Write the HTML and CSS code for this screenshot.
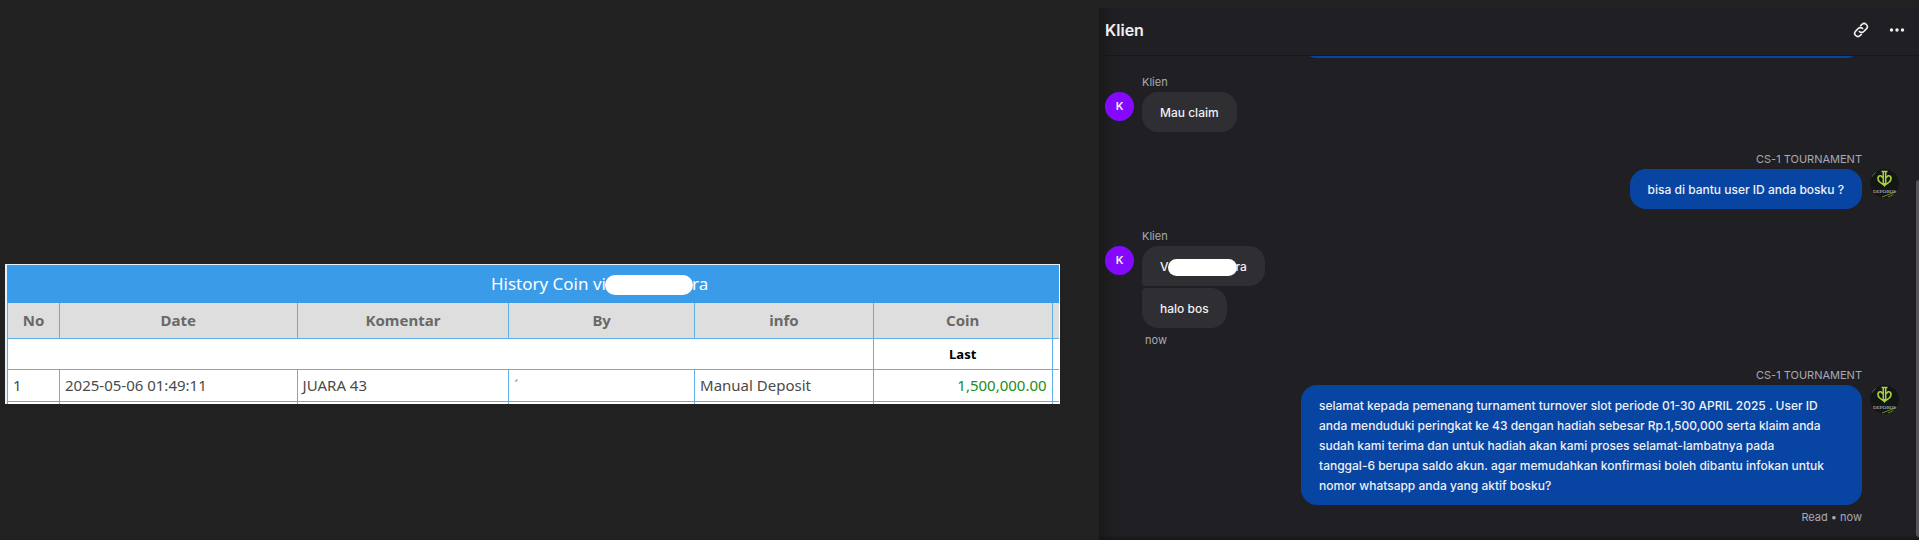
FILE: index.html
```
<!DOCTYPE html>
<html lang="id">
<head>
    <meta charset="UTF-8">
    <meta name="viewport" content="width=device-width, initial-scale=1.0">
    <title>Klien</title>
    <link rel="stylesheet" href="styles.css">
</head>
<body>
    <main class="page">
        <section class="history">
            <div class="history-box">
                <table>
                    <colgroup>
                        <col class="col-no">
                        <col class="col-date">
                        <col class="col-comment">
                        <col class="col-by">
                        <col class="col-info">
                        <col class="col-coin">
                        <col>
                    </colgroup>
                    <thead>
                        <tr class="title-row">
                            <th colspan="7">History Coin vi<span class="mask"></span>ra</th>
                        </tr>
                        <tr class="head-row">
                            <th>No</th>
                            <th>Date</th>
                            <th>Komentar</th>
                            <th>By</th>
                            <th>info</th>
                            <th>Coin</th>
                            <th></th>
                        </tr>
                    </thead>
                    <tbody>
                        <tr class="last-row">
                            <td colspan="5"></td>
                            <td>Last</td>
                            <td></td>
                        </tr>
                        <tr class="data-row">
                            <td>1</td>
                            <td>2025-05-06 01:49:11</td>
                            <td>JUARA 43</td>
                            <td class="faint">´</td>
                            <td>Manual Deposit</td>
                            <td class="coin">1,500,000.00</td>
                            <td></td>
                        </tr>
                        <tr class="data-row">
                            <td></td>
                            <td></td>
                            <td></td>
                            <td></td>
                            <td></td>
                            <td></td>
                            <td></td>
                        </tr>
                    </tbody>
                </table>
            </div>
        </section>

        <section class="chat">
            <header class="chat-header">
                <h1>Klien</h1>
                <button type="button" aria-label="Copy link">
                    <svg width="16" height="16" viewBox="0 0 24 24" fill="none" stroke="currentColor" stroke-width="2.4" stroke-linecap="round">
                        <path d="M9.500 14.200a4.700 4.700 0 0 0 6.700 0l3.800-3.800a4.700 4.700 0 0 0-6.700-6.700L11.500 5.500"/>
                        <path d="M14.500 9.800a4.700 4.700 0 0 0-6.700 0l-3.800 3.800a4.700 4.700 0 0 0 6.700 6.700L12.500 18.500"/>
                    </svg>
                </button>
                <button type="button" aria-label="More">
                    <svg width="16" height="16" viewBox="0 0 16 16" fill="currentColor">
                        <circle cx="2.500" cy="8" r="1.700"/>
                        <circle cx="8" cy="8" r="1.700"/>
                        <circle cx="13.500" cy="8" r="1.700"/>
                    </svg>
                </button>
            </header>

            <div class="messages">
                <div class="message agent previous">
                    <div class="stack">
                        <p class="bubble wide"></p>
                    </div>
                    <div class="avatar-space"></div>
                </div>

                <div class="message">
                    <div class="avatar">K</div>
                    <div class="stack">
                        <div class="name">Klien</div>
                        <p class="bubble">Mau claim</p>
                    </div>
                </div>

                <div class="message agent">
                    <div class="stack">
                        <div class="name">CS-1 TOURNAMENT</div>
                        <p class="bubble">bisa di bantu user ID anda bosku ?</p>
                    </div>
                    <svg class="avatar" viewBox="0 0 29 29">
                        <g id="logo">
                            <circle cx="14.5" cy="14.5" r="14.5" fill="#141515"/>
                            <path d="M1.500 8L6 2.500M12 28L26.500 22.500M18 28L24 25.500" stroke="#6d8f1c" fill="none"/>
                            <path d="M11.500 2.500h6M13.300 2.500v12M15.700 2.500v12" stroke="#a9d636" stroke-width="1.500" fill="none"/>
                            <path d="M14.500 16C10 14 8 12 8 9.500C8 6 12.500 6 12.500 9M14.500 16C19 14 21 12 21 9.500C21 6 16.500 6 16.500 9" stroke="#a9d636" stroke-width="1.600" fill="none"/>
                            <path d="M11.500 14h6l-3 4z" fill="#a9d636"/>
                            <text x="14.500" y="23.500" text-anchor="middle" class="logo-text">DEPOBOS</text>
                        </g>
                    </svg>
                </div>

                <div class="message">
                    <div class="avatar">K</div>
                    <div class="stack">
                        <div class="name">Klien</div>
                        <p class="bubble first">V<span class="mask"></span>ra</p>
                        <p class="bubble second">halo bos</p>
                        <div class="status">now</div>
                    </div>
                </div>

                <div class="message agent">
                    <div class="stack">
                        <div class="name">CS-1 TOURNAMENT</div>
                        <p class="bubble wide">selamat kepada pemenang turnament turnover slot periode 01-30 APRIL 2025 . User ID<br>
                            anda menduduki peringkat ke 43 dengan hadiah sebesar Rp.1,500,000 serta klaim anda<br>
                            sudah kami terima dan untuk hadiah akan kami proses selamat-lambatnya pada<br>
                            tanggal-6 berupa saldo akun. agar memudahkan konfirmasi boleh dibantu infokan untuk<br>
                            nomor whatsapp anda yang aktif bosku?</p>
                        <div class="status">Read • now</div>
                    </div>
                    <svg class="avatar" viewBox="0 0 29 29"><use href="#logo"/></svg>
                </div>
                <div class="scrollbar"></div>
            </div>
        </section>
    </main>
</body>
</html>
```

FILE: styles.css
```
* {
    box-sizing: border-box;
}

body {
    margin: 0;
    background-color: #212121;
    font-family: Inter, sans-serif;
    color: #f0f0f2;
}

.logo-text {
    font-family: "Liberation Serif", serif;
    font-size: 5px;
    font-weight: 400;
    fill: #d8d8d8;
}

.page {
    display: grid;
    grid-template-columns: 1099fr 820fr;
    height: 100vh;
}

/* history table */
.history {
    padding: 264px 39px 0 5px;
}

.history-box {
    overflow: hidden;
    height: 140px;
    padding: 1px 1px 0 2px;
    border-right: 1px solid #fff;
    background-color: #e6f1fa;
}

table {
    width: 112%;
    table-layout: fixed;
    border-collapse: collapse;
    background-color: #fff;
    font-family: "Noto Sans", sans-serif;
    font-size: 15px;
    line-height: 20px;
    color: #4a4a4a;
}

.col-no { width: 52px; }
.col-date { width: 20.2%; }
.col-comment { width: 18%; }
.col-by { width: 15.8%; }
.col-info { width: 15.2%; }
.col-coin { width: 15.2%; }

th,
td {
    padding: 0 5px 2px;
    border: 1px solid #5fb0e6;
}

.title-row th {
    height: 37px;
    padding: 1px 5px 0 13px;
    background-color: #3a9be9;
    border-color: #3a9be9;
    color: #fff;
    font-size: 17px;
    font-weight: 400;
}

.title-row .mask {
    width: 88px;
    height: 20px;
}

.mask {
    display: inline-block;
    margin: 0 -1px;
    border-radius: 10px;
    background-color: #fff;
    vertical-align: middle;
}

.head-row th {
    height: 36px;
    background-color: #dedede;
    color: #696969;
    font-weight: 700;
}

.last-row td {
    height: 31px;
    padding: 0;
    color: #000;
    font-size: 13px;
    font-weight: 700;
    text-align: center;
}

.data-row td {
    height: 32px;
}

.data-row .coin {
    color: #228b22;
    text-align: right;
}

.data-row .faint {
    color: #a08a78;
}

/* chat */
.chat {
    display: flex;
    flex-direction: column;
    min-width: 0;
    height: 100vh;
    padding-top: 8px;
    background: linear-gradient(#212121 8px, transparent 8px),
        linear-gradient(to top, #151517, transparent 5px),
        linear-gradient(to right, #19191b, #202024 16px);
}

.chat-header {
    display: flex;
    align-items: center;
    gap: 20px;
    height: 48px;
    padding: 0 14px 3px 6px;
    border-bottom: 1px solid #17171a;
}

.chat-header h1 {
    flex: 1;
    margin: 0;
    font-size: 16px;
    line-height: 20px;
    font-weight: 600;
}

.chat-header button {
    display: flex;
    padding: 0;
    border: 0;
    background: none;
    color: #f0f0f2;
}

.messages {
    position: relative;
    display: flex;
    flex: 1;
    flex-direction: column;
    justify-content: flex-end;
    gap: 18px;
    min-height: 0;
    overflow: hidden;
    padding: 0 20px 15px 6px;
}

.message {
    display: flex;
    flex-shrink: 0;
    align-items: flex-start;
    gap: 8px;
}

.agent {
    justify-content: flex-end;
}

.previous {
    margin-bottom: -3px;
}

.stack {
    display: flex;
    flex-direction: column;
    align-items: flex-start;
    max-width: 561px;
}

.agent .stack {
    align-items: flex-end;
}

.name {
    font-size: 11px;
    line-height: 19px;
    color: #a9a9b2;
}

.status {
    margin-top: 4px;
    font-size: 11px;
    line-height: 16px;
    color: #a9a9b2;
}

.message:not(.agent) .status {
    padding-left: 3px;
}

.avatar {
    flex: none;
    width: 29px;
    height: 29px;
    margin-top: 19px;
    border-radius: 50%;
    font-size: 11px;
    line-height: 29px;
    font-weight: 600;
    text-align: center;
}

div.avatar {
    background-color: #8409ff;
}

.avatar-space {
    width: 29px;
}

.bubble {
    margin: 0;
    padding: 11px 18px 9px;
    border-radius: 16px;
    background-color: #2e2e33;
    font-size: 12px;
    line-height: 20px;
    font-weight: 500;
}

.agent .bubble {
    background-color: #0845a3;
}

.bubble.wide {
    width: 561px;
    min-height: 40px;
}

.bubble.first {
    border-bottom-left-radius: 4px;
}

.bubble.second {
    margin-top: 2px;
    border-top-left-radius: 4px;
}

.bubble .mask {
    width: 69px;
    height: 17px;
}

.scrollbar {
    position: absolute;
    top: 124px;
    right: 0;
    bottom: 3px;
    width: 3px;
    border-radius: 3px 0 0 3px;
    background-color: #55555c;
}
```
